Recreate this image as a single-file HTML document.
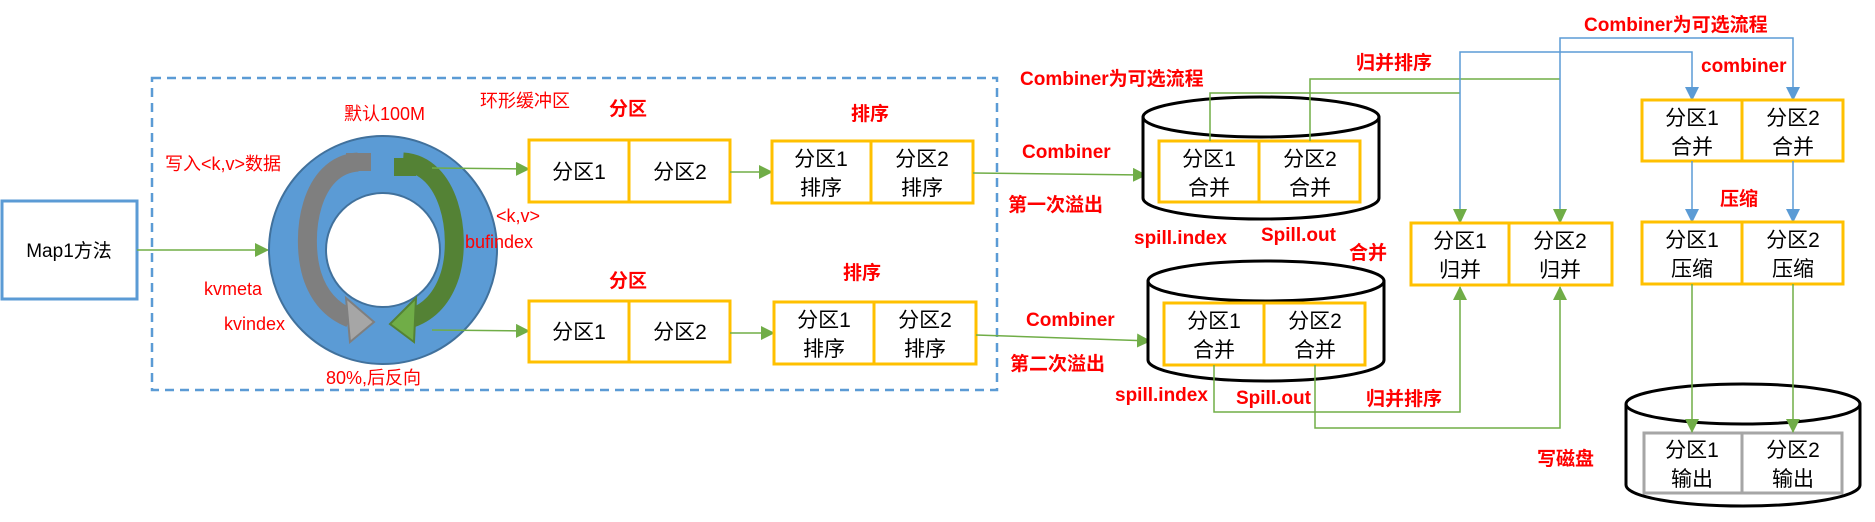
<!DOCTYPE html>
<html><head><meta charset="utf-8"><style>
html,body{margin:0;padding:0;background:#fff;}
svg{display:block;}
text{font-family:"Liberation Sans","Noto Sans CJK SC",sans-serif;}
.r{fill:#ff0000;font-size:18px;}
.b{fill:#ff0000;font-size:19px;font-weight:bold;}
.k{fill:#000;font-size:21px;}
.yb{fill:#fff;stroke:#ffc000;stroke-width:3;}
.gb{fill:#fff;stroke:#a6a6a6;stroke-width:3;}
.gl{stroke:#70ad47;stroke-width:1.5;fill:none;}
.bl{stroke:#5b9bd5;stroke-width:1.5;fill:none;}
</style></head><body>
<svg width="1875" height="522" viewBox="0 0 1875 522" xmlns="http://www.w3.org/2000/svg">
<defs>
<marker id="ga" markerWidth="14" markerHeight="14" refX="13" refY="7" orient="auto" markerUnits="userSpaceOnUse"><path d="M0,0 L14,7 L0,14 Z" fill="#70ad47"/></marker>
<marker id="ba" markerWidth="14" markerHeight="14" refX="13" refY="7" orient="auto" markerUnits="userSpaceOnUse"><path d="M0,0 L14,7 L0,14 Z" fill="#5b9bd5"/></marker>
</defs>
<rect x="152" y="78" width="845" height="312" fill="none" stroke="#5b9bd5" stroke-width="2.5" stroke-dasharray="9,6"/>
<rect x="2" y="201" width="135" height="98" fill="#fff" stroke="#5b9bd5" stroke-width="3"/>
<text class="k" x="69" y="257" text-anchor="middle" style="font-size:19px">Map1方法</text>
<line class="gl" x1="137" y1="250" x2="268" y2="250" marker-end="url(#ga)"/>
<circle cx="383" cy="250" r="85" fill="none" stroke="#5b9bd5" stroke-width="58"/>
<circle cx="383" cy="250" r="114" fill="none" stroke="#41719c" stroke-width="2"/>
<circle cx="383" cy="250" r="57" fill="#fff" stroke="#41719c" stroke-width="2"/>
<path d="M358,162 C310,165 300,235 312,275 C320,300 335,312 350,318" fill="none" stroke="#7f7f7f" stroke-width="19"/>
<path d="M346,298 L374,322 L350,342 Z" fill="#a6a6a6" stroke="#7f7f7f" stroke-width="2"/>
<rect x="346" y="153" width="25" height="18" fill="#7f7f7f"/>
<path d="M403,162 C450,165 462,235 450,275 C442,300 428,312 412,318" fill="none" stroke="#548235" stroke-width="19"/>
<path d="M416,298 L390,324 L414,342 Z" fill="#70ad47" stroke="#548235" stroke-width="2"/>
<rect x="394" y="158" width="22" height="18" fill="#548235"/>
<text class="r" x="165" y="170">写入&lt;k,v&gt;数据</text>
<text class="r" x="344" y="120">默认100M</text>
<text class="r" x="480" y="107">环形缓冲区</text>
<text class="r" x="496" y="222">&lt;k,v&gt;</text>
<text class="r" x="465" y="248">bufindex</text>
<text class="r" x="204" y="295">kvmeta</text>
<text class="r" x="224" y="330">kvindex</text>
<text class="r" x="326" y="384">80%,后反向</text>
<text class="b" x="609" y="115">分区</text>
<text class="b" x="851" y="120">排序</text>
<text class="b" x="609" y="287">分区</text>
<text class="b" x="843" y="279">排序</text>
<line class="gl" x1="432" y1="168" x2="529" y2="169" marker-end="url(#ga)"/>
<rect class="yb" x="529" y="140" width="201" height="62"/><line x1="629" y1="140" x2="629" y2="202" stroke="#ffc000" stroke-width="3"/>
<text class="k" x="579" y="179" text-anchor="middle">分区1</text><text class="k" x="680" y="179" text-anchor="middle">分区2</text>
<line class="gl" x1="730" y1="172" x2="772" y2="172" marker-end="url(#ga)"/>
<rect class="yb" x="772" y="141" width="201" height="62"/><line x1="871" y1="141" x2="871" y2="203" stroke="#ffc000" stroke-width="3"/>
<text class="k" x="821" y="166" text-anchor="middle">分区1</text><text class="k" x="821" y="195" text-anchor="middle">排序</text>
<text class="k" x="922" y="166" text-anchor="middle">分区2</text><text class="k" x="922" y="195" text-anchor="middle">排序</text>
<line class="gl" x1="973" y1="173" x2="1146" y2="175" marker-end="url(#ga)"/>
<line class="gl" x1="432" y1="330" x2="529" y2="331" marker-end="url(#ga)"/>
<rect class="yb" x="529" y="301" width="201" height="61"/><line x1="629" y1="301" x2="629" y2="362" stroke="#ffc000" stroke-width="3"/>
<text class="k" x="579" y="339" text-anchor="middle">分区1</text><text class="k" x="680" y="339" text-anchor="middle">分区2</text>
<line class="gl" x1="730" y1="333" x2="774" y2="333" marker-end="url(#ga)"/>
<rect class="yb" x="774" y="302" width="202" height="62"/><line x1="874" y1="302" x2="874" y2="364" stroke="#ffc000" stroke-width="3"/>
<text class="k" x="824" y="327" text-anchor="middle">分区1</text><text class="k" x="824" y="356" text-anchor="middle">排序</text>
<text class="k" x="925" y="327" text-anchor="middle">分区2</text><text class="k" x="925" y="356" text-anchor="middle">排序</text>
<line class="gl" x1="976" y1="335" x2="1150" y2="341" marker-end="url(#ga)"/>
<path d="M1143,117 L1143,198 A118,21 0 0 0 1379,198 L1379,117" fill="#fff" stroke="#000" stroke-width="3"/>
<ellipse cx="1261" cy="117" rx="118" ry="20" fill="#fff" stroke="#000" stroke-width="3"/>
<rect class="yb" x="1159" y="141" width="201" height="61"/><line x1="1259" y1="141" x2="1259" y2="202" stroke="#ffc000" stroke-width="3"/>
<text class="k" x="1209" y="166" text-anchor="middle">分区1</text><text class="k" x="1209" y="195" text-anchor="middle">合并</text>
<text class="k" x="1310" y="166" text-anchor="middle">分区2</text><text class="k" x="1310" y="195" text-anchor="middle">合并</text>
<path d="M1148,281 L1148,360 A118,21 0 0 0 1384,360 L1384,281" fill="#fff" stroke="#000" stroke-width="3"/>
<ellipse cx="1266" cy="281" rx="118" ry="20" fill="#fff" stroke="#000" stroke-width="3"/>
<rect class="yb" x="1164" y="303" width="201" height="62"/><line x1="1264" y1="303" x2="1264" y2="365" stroke="#ffc000" stroke-width="3"/>
<text class="k" x="1214" y="328" text-anchor="middle">分区1</text><text class="k" x="1214" y="357" text-anchor="middle">合并</text>
<text class="k" x="1315" y="328" text-anchor="middle">分区2</text><text class="k" x="1315" y="357" text-anchor="middle">合并</text>
<polyline class="gl" points="1210,141 1210,93 1460,93"/>
<polyline class="gl" points="1310,141 1310,79 1560,79"/>
<polyline class="bl" points="1460,210 1460,52 1692,52 1692,100" marker-end="url(#ba)"/>
<polyline class="bl" points="1560,210 1560,38 1793,38 1793,100" marker-end="url(#ba)"/>
<path d="M1453,209 L1467,209 L1460,224 Z" fill="#70ad47"/>
<path d="M1553,209 L1567,209 L1560,224 Z" fill="#70ad47"/>
<polyline class="gl" points="1214,365 1214,412 1460,412 1460,287" marker-end="url(#ga)"/>
<polyline class="gl" points="1315,365 1315,428 1560,428 1560,287" marker-end="url(#ga)"/>
<rect class="yb" x="1411" y="223" width="201" height="62"/><line x1="1509" y1="223" x2="1509" y2="285" stroke="#ffc000" stroke-width="3"/>
<text class="k" x="1460" y="248" text-anchor="middle">分区1</text><text class="k" x="1460" y="277" text-anchor="middle">归并</text>
<text class="k" x="1560" y="248" text-anchor="middle">分区2</text><text class="k" x="1560" y="277" text-anchor="middle">归并</text>
<rect class="yb" x="1642" y="100" width="201" height="61"/><line x1="1742" y1="100" x2="1742" y2="161" stroke="#ffc000" stroke-width="3"/>
<text class="k" x="1692" y="125" text-anchor="middle">分区1</text><text class="k" x="1692" y="154" text-anchor="middle">合并</text>
<text class="k" x="1793" y="125" text-anchor="middle">分区2</text><text class="k" x="1793" y="154" text-anchor="middle">合并</text>
<line class="bl" x1="1692" y1="161" x2="1692" y2="222" marker-end="url(#ba)"/>
<line class="bl" x1="1793" y1="161" x2="1793" y2="222" marker-end="url(#ba)"/>
<rect class="yb" x="1642" y="222" width="201" height="62"/><line x1="1742" y1="222" x2="1742" y2="284" stroke="#ffc000" stroke-width="3"/>
<text class="k" x="1692" y="247" text-anchor="middle">分区1</text><text class="k" x="1692" y="276" text-anchor="middle">压缩</text>
<text class="k" x="1793" y="247" text-anchor="middle">分区2</text><text class="k" x="1793" y="276" text-anchor="middle">压缩</text>
<path d="M1626,404 L1626,485 A117,21 0 0 0 1860,485 L1860,404" fill="#fff" stroke="#000" stroke-width="3"/>
<ellipse cx="1743" cy="404" rx="117" ry="20" fill="#fff" stroke="#000" stroke-width="3"/>
<rect class="gb" x="1644" y="433" width="198" height="60"/><line x1="1742" y1="433" x2="1742" y2="493" stroke="#a6a6a6" stroke-width="3"/>
<text class="k" x="1692" y="457" text-anchor="middle">分区1</text><text class="k" x="1692" y="486" text-anchor="middle">输出</text>
<text class="k" x="1793" y="457" text-anchor="middle">分区2</text><text class="k" x="1793" y="486" text-anchor="middle">输出</text>
<line class="gl" x1="1692" y1="284" x2="1692" y2="432" marker-end="url(#ga)"/>
<line class="gl" x1="1793" y1="284" x2="1793" y2="432" marker-end="url(#ga)"/>
<text class="b" x="1584" y="31">Combiner为可选流程</text>
<text class="b" x="1020" y="85">Combiner为可选流程</text>
<text class="b" x="1356" y="69">归并排序</text>
<text class="b" x="1701" y="72">combiner</text>
<text class="b" x="1720" y="205">压缩</text>
<text class="b" x="1537" y="465">写磁盘</text>
<text class="b" x="1022" y="158">Combiner</text>
<text class="b" x="1008" y="211">第一次溢出</text>
<text class="b" x="1134" y="244">spill.index</text>
<text class="b" x="1261" y="241">Spill.out</text>
<text class="b" x="1349" y="259">合并</text>
<text class="b" x="1026" y="326">Combiner</text>
<text class="b" x="1010" y="370">第二次溢出</text>
<text class="b" x="1115" y="401">spill.index</text>
<text class="b" x="1236" y="404">Spill.out</text>
<text class="b" x="1366" y="405">归并排序</text>
</svg>
</body></html>
